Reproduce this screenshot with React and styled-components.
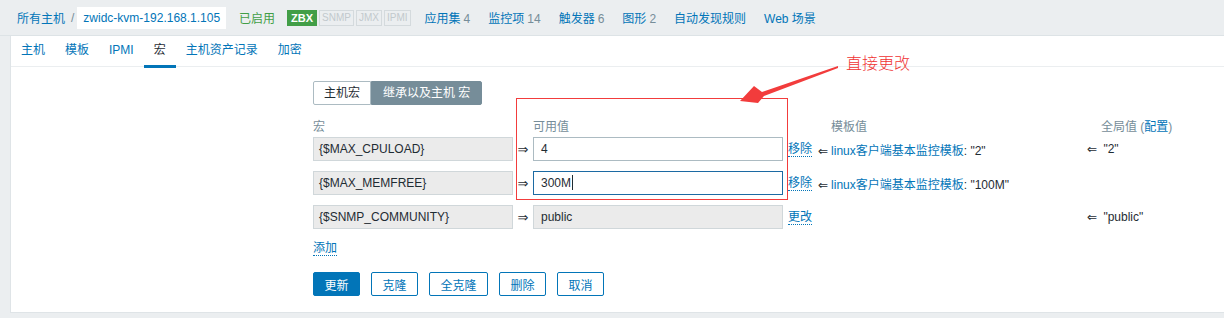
import styled, { createGlobalStyle } from "styled-components";

const GlobalStyle = createGlobalStyle`
  html, body {
    margin: 0;
    padding: 0;
    background: #ebeef0;
  }
  body {
    font-family: "Liberation Sans", Arial, "Noto Sans CJK SC", sans-serif;
    font-size: 12px;
    color: #1f2c33;
  }
`;

const blue = "#0275b8";
const gray = "#768d99";

const Page = styled.div`
  position: relative;
  width: 1224px;
  height: 318px;
  overflow: hidden;
`;

const Header = styled.div`
  height: 35px;
  border-bottom: 1px solid #dde3e6;
  display: flex;
  align-items: center;
  padding-left: 17px;
  white-space: nowrap;
`;

const Crumb = styled.span`
  color: ${blue};
`;

const Slash = styled.span`
  color: ${gray};
  margin: 0 3px 0 6px;
`;

const HostBox = styled.span`
  background: #fff;
  height: 22px;
  line-height: 22px;
  padding: 0 6px;
  color: ${blue};
`;

const Status = styled.span`
  color: #429e47;
  margin-left: 13px;
`;

const Badges = styled.div`
  display: flex;
  gap: 2px;
  margin-left: 12px;
`;

const Badge = styled.span`
  height: 16px;
  line-height: 14px;
  padding: 0 ${(p) => (p.$on ? "3px" : "2px")};
  font-size: ${(p) => (p.$on ? "11px" : "10px")};
  box-sizing: border-box;
  border: 1px solid ${(p) => (p.$on ? "#429e47" : "#d4dadd")};
  background: ${(p) => (p.$on ? "#429e47" : "transparent")};
  color: ${(p) => (p.$on ? "#fff" : "#c2c9cd")};
  font-weight: ${(p) => (p.$on ? "bold" : "normal")};
`;

const Nav = styled.div`
  display: flex;
  gap: 18px;
  margin-left: 14px;
`;

const NavItem = styled.span`
  color: ${blue};
  sup {
    color: ${gray};
    vertical-align: baseline;
    font-size: 12px;
    margin-left: 3px;
  }
`;

const Panel = styled.div`
  margin-left: 10px;
  background: #fff;
  border-left: 1px solid #dfe4e7;
  border-bottom: 1px solid #dfe4e7;
  height: 276px;
`;

const Tabs = styled.div`
  display: flex;
  height: 30px;
  border-bottom: 1px solid #ebeef0;
`;

const Tab = styled.div`
  padding: 0 10px;
  line-height: 29px;
  color: ${(p) => (p.$active ? "#1f2c33" : blue)};
  border-bottom: 3px solid ${(p) => (p.$active ? blue : "transparent")};
  margin-bottom: -2px;
`;

const Body = styled.div`
  padding: 14px 0 0 302px;
`;

const Segmented = styled.div`
  display: flex;
  height: 24px;
  margin-bottom: 12px;
`;

const SegButton = styled.div`
  box-sizing: border-box;
  height: 24px;
  line-height: 22px;
  padding: 0 ${(p) => (p.$active ? "11px" : "10px")};
  border: 1px solid ${(p) => (p.$active ? gray : "#acbbc2")};
  background: ${(p) => (p.$active ? gray : "#fff")};
  color: ${(p) => (p.$active ? "#fff" : "#1f2c33")};
  border-radius: ${(p) => (p.$active ? "0 2px 2px 0" : "2px 0 0 2px")};
`;

const MacroRow = styled.div`
  display: grid;
  grid-template-columns: 200px 20px 250px 35px 269px auto;
  align-items: center;
  height: ${(p) => (p.$head ? "14px" : "24px")};
  margin-bottom: ${(p) => (p.$head ? "6px" : "10px")};
  white-space: nowrap;
`;

const HeadLabel = styled.div`
  color: ${gray};
  padding-left: ${(p) => p.$indent || 0}px;
  a {
    color: ${blue};
  }
`;

const Field = styled.div`
  box-sizing: border-box;
  height: 24px;
  line-height: 22px;
  padding: 0 5px;
  border: 1px solid ${(p) => (p.$focus ? "#1c6aa3" : p.$readonly ? "#d0d7da" : "#acbbc2")};
  background: ${(p) => (p.$readonly ? "#ebebeb" : "#fff")};
  color: #1f2c33;
  ${(p) => p.$value && "padding-left: 7px;"}
`;

const Caret = styled.span`
  display: inline-block;
  width: 1px;
  height: 15px;
  background: #1f2c33;
  vertical-align: -3px;
  margin-left: 1px;
`;

const Arrow = styled.div`
  text-align: center;
  font-family: "DejaVu Sans", sans-serif;
  font-size: 13px;
`;

const ActionLink = styled.span`
  justify-self: start;
  margin-left: 5px;
  color: ${blue};
  border-bottom: 1px dotted ${blue};
  line-height: 14px;
`;

const Inherit = styled.div`
  color: #1f2c33;
  i {
    font-style: normal;
    font-family: "DejaVu Sans", sans-serif;
    font-size: 12px;
    margin-right: 3px;
  }
  span {
    color: ${blue};
  }
`;

const AddLink = styled.span`
  display: inline-block;
  color: ${blue};
  border-bottom: 1px dotted ${blue};
  line-height: 14px;
  margin-top: 2px;
`;

const Buttons = styled.div`
  display: flex;
  gap: 11px;
  margin-top: 16px;
`;

const Button = styled.button`
  font: inherit;
  height: 24px;
  padding: 0 10.5px;
  border-radius: 2px;
  border: 1px solid ${blue};
  background: ${(p) => (p.$primary ? blue : "#fff")};
  color: ${(p) => (p.$primary ? "#fff" : blue)};
`;

const RedBox = styled.div`
  position: absolute;
  left: 516px;
  top: 98px;
  width: 272px;
  height: 102px;
  box-sizing: border-box;
  border: 1px solid #f23c3c;
  pointer-events: none;
`;

const Note = styled.div`
  position: absolute;
  left: 846px;
  top: 52px;
  font-size: 16px;
  line-height: 20px;
  color: #f03232;
  font-family: "Noto Sans CJK SC", sans-serif;
  font-weight: 300;
`;

const NoteArrow = styled.svg`
  position: absolute;
  left: 0;
  top: 0;
  pointer-events: none;
`;

const macros = [
  { name: "{$MAX_CPULOAD}", value: "4", action: "移除", tpl: '"2"', global: '"2"' },
  { name: "{$MAX_MEMFREE}", value: "300M", action: "移除", tpl: '"100M"', focus: true },
  { name: "{$SNMP_COMMUNITY}", value: "public", action: "更改", readonly: true, global: '"public"' },
];

export default function App() {
  return (
    <Page>
      <GlobalStyle />
      <Header>
        <Crumb>所有主机</Crumb>
        <Slash>/</Slash>
        <HostBox>zwidc-kvm-192.168.1.105</HostBox>
        <Status>已启用</Status>
        <Badges>
          <Badge $on>ZBX</Badge>
          <Badge>SNMP</Badge>
          <Badge>JMX</Badge>
          <Badge>IPMI</Badge>
        </Badges>
        <Nav>
          <NavItem>应用集<sup>4</sup></NavItem>
          <NavItem>监控项<sup>14</sup></NavItem>
          <NavItem>触发器<sup>6</sup></NavItem>
          <NavItem>图形<sup>2</sup></NavItem>
          <NavItem>自动发现规则</NavItem>
          <NavItem>Web 场景</NavItem>
        </Nav>
      </Header>
      <Panel>
        <Tabs>
          <Tab>主机</Tab>
          <Tab>模板</Tab>
          <Tab>IPMI</Tab>
          <Tab $active>宏</Tab>
          <Tab>主机资产记录</Tab>
          <Tab>加密</Tab>
        </Tabs>
        <Body>
          <Segmented>
            <SegButton>主机宏</SegButton>
            <SegButton $active>继承以及主机 宏</SegButton>
          </Segmented>
          <MacroRow $head>
            <HeadLabel>宏</HeadLabel>
            <div />
            <HeadLabel>可用值</HeadLabel>
            <div />
            <HeadLabel $indent={13}>模板值</HeadLabel>
            <HeadLabel $indent={14}>
              全局值 (<a>配置</a>)
            </HeadLabel>
          </MacroRow>
          {macros.map((m) => (
            <MacroRow key={m.name}>
              <Field $readonly>{m.name}</Field>
              <Arrow>⇒</Arrow>
              <Field $value $readonly={m.readonly} $focus={m.focus}>
                {m.value}
                {m.focus && <Caret />}
              </Field>
              <ActionLink>{m.action}</ActionLink>
              <Inherit>
                {m.tpl && (
                  <>
                    <i>⇐</i>
                    <span>linux客户端基本监控模板</span>: {m.tpl}
                  </>
                )}
              </Inherit>
              <Inherit>
                {m.global && (
                  <>
                    <i>⇐</i> {m.global}
                  </>
                )}
              </Inherit>
            </MacroRow>
          ))}
          <AddLink>添加</AddLink>
          <Buttons>
            <Button $primary>更新</Button>
            <Button>克隆</Button>
            <Button>全克隆</Button>
            <Button>删除</Button>
            <Button>取消</Button>
          </Buttons>
        </Body>
      </Panel>
      <RedBox />
      <NoteArrow width="1224" height="318" viewBox="0 0 1224 318">
        <polygon
          points="838,66 762,92 754,86 740,101 758,103 764,96 838,68"
          fill="#f23c3c"
        />
      </NoteArrow>
      <Note>直接更改</Note>
    </Page>
  );
}
